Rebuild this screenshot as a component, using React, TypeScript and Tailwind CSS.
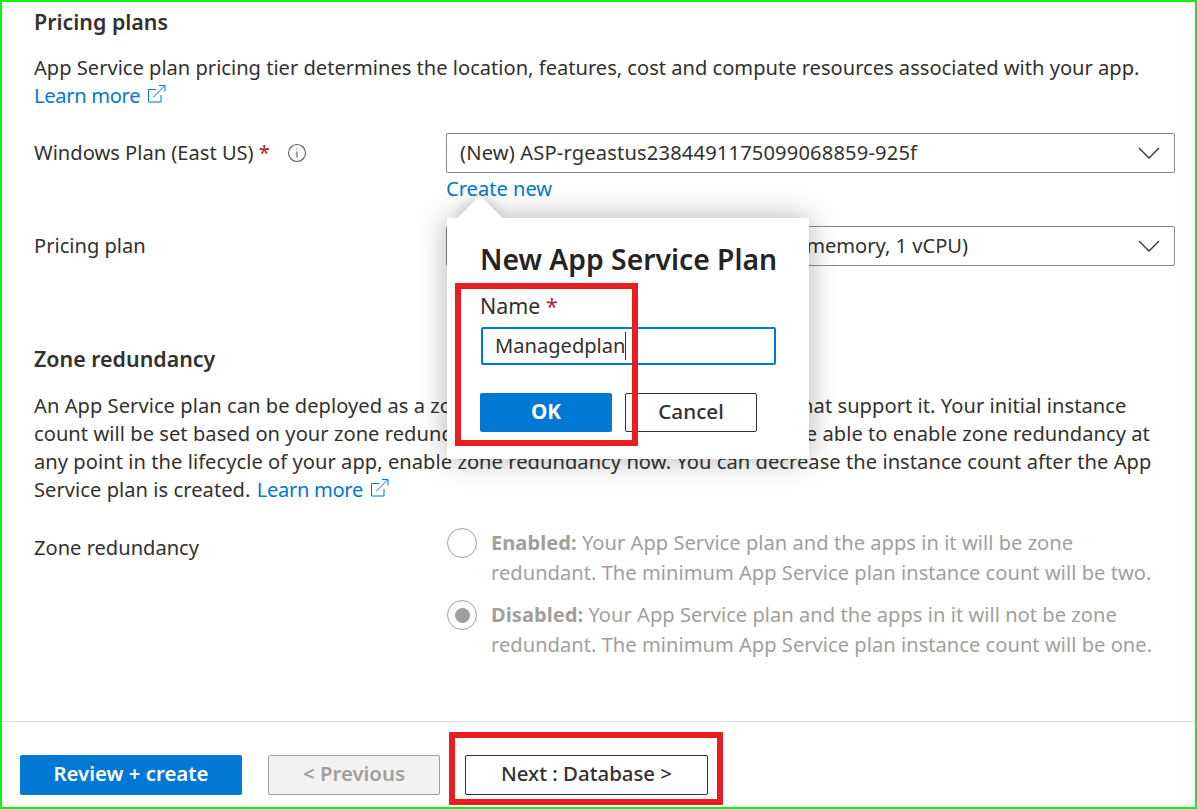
import React from "react";

const font = { fontFamily: '"Noto Sans", "Open Sans", sans-serif' };

function ExternalLink() {
  return (
    <svg width="20" height="20" viewBox="0 0 20 20" fill="none" stroke="#0078d4" strokeWidth="1" className="inline-block ml-[6px] align-[-1px]">
      <path d="M10 5.5H2.5V18H15V11" />
      <path d="M7.5 13L18.5 2M13 1.5H19V7.5" />
    </svg>
  );
}

function Info() {
  return (
    <svg width="20" height="20" viewBox="0 0 20 20" fill="none" stroke="#605e5c" strokeWidth="1.1">
      <circle cx="10" cy="10" r="8.5" />
      <path d="M10 8.5V14.5" />
      <path d="M10 5.4V6.6" />
    </svg>
  );
}

function Chevron() {
  return (
    <svg width="24" height="14" viewBox="0 0 24 14" fill="none" stroke="#323130" strokeWidth="1.3">
      <path d="M2 2L12 12L22 2" />
    </svg>
  );
}

function SelectBox({ text, wide }: { text: string; wide?: boolean }) {
  return (
    <div className="h-[40px] border border-[#8a8886] rounded-[2px] flex items-center justify-between pl-[13px] pr-[13px] bg-white">
      <span className={wide ? "whitespace-nowrap tracking-[0.17px]" : "whitespace-nowrap"}>{text}</span>
      <Chevron />
    </div>
  );
}

function RadioOption({ checked, label, lines }: { checked?: boolean; label: string; lines: string[] }) {
  return (
    <div className="flex items-start gap-[14px] text-[#a19f9d] leading-[30px]">
      <div className="w-[30px] h-[30px] ml-[1px] rounded-full border border-[#a19f9d] flex items-center justify-center shrink-0 bg-white">
        {checked && <div className="w-[15px] h-[15px] rounded-full bg-[#a19f9d]" />}
      </div>
      <div className="whitespace-nowrap tracking-[0.03px]">
        <b className="font-bold">{label}</b> {lines[0]}
        <br />
        {lines[1]}
      </div>
    </div>
  );
}

export default function App() {
  return (
    <div
      style={font}
      className="relative w-[1197px] h-[809px] overflow-hidden bg-white border-2 border-[#0cf512] text-[#323130] text-[20.1px] flex flex-col"
    >
      <main className="flex-1 pl-[32px] pr-[20px] pt-[4px]">
        <h2 className="text-[21.4px] leading-[32px] font-semibold">Pricing plans</h2>
        <p className="mt-[16px] leading-[28px] whitespace-nowrap">
          App Service plan pricing tier determines the location, features, cost and compute resources associated with your app.
          <br />
          <a className="text-[#0078d4] tracking-[-0.3px]">Learn more<ExternalLink /></a>
        </p>

        <div className="mt-[23px] grid grid-cols-[412px_729px]">
          <div className="flex items-center h-[40px] gap-[17px]">
            <span>Windows Plan (East US) <span className="text-[#a4262c]">*</span></span>
            <Info />
          </div>
          <div>
            <SelectBox wide text="(New) ASP-rgeastus2384491175099068859-925f" />
            <a className="block text-[#0078d4] leading-[32px]">Create new</a>
          </div>
        </div>

        <div className="mt-[21px] grid grid-cols-[412px_729px]">
          <div className="flex items-center h-[40px]">Pricing plan</div>
          <SelectBox text="Standard S1 (100 total ACU, 1.75 GiB memory, 1 vCPU)" />
        </div>

        <h2 className="mt-[77px] text-[21.4px] leading-[32px] font-semibold">Zone redundancy</h2>
        <p className="mt-[17px] leading-[28px] whitespace-nowrap tracking-[0.05px]">
          An App Service plan can be deployed as a zone redundant service in the regions that support it. Your initial instance
          <br />
          count will be set based on your zone redundancy selections. If you would like to be able to enable zone redundancy at
          <br />
          any point in the lifecycle of your app, enable zone redundancy now. You can decrease the instance count after the App
          <br />
          Service plan is created. <a className="text-[#0078d4] ml-[1px] tracking-[-0.3px]">Learn more<ExternalLink /></a>
        </p>

        <div className="mt-[24px] grid grid-cols-[412px_729px]">
          <div className="leading-[30px] pt-[5px]">Zone redundancy</div>
          <div className="flex flex-col gap-[12px]">
            <RadioOption
              label="Enabled:"
              lines={[
                "Your App Service plan and the apps in it will be zone",
                "redundant. The minimum App Service plan instance count will be two.",
              ]}
            />
            <RadioOption
              checked
              label="Disabled:"
              lines={[
                "Your App Service plan and the apps in it will not be zone",
                "redundant. The minimum App Service plan instance count will be one.",
              ]}
            />
          </div>
        </div>
      </main>

      <footer className="h-[86px] border-t border-[#e1dfdd] pl-[18px] pt-[33px] flex items-start font-semibold text-[20.4px] leading-[34px]">
        <button className="w-[222px] h-[40px] pb-[5px] rounded-[2px] bg-[#0078d4] text-white">Review + create</button>
        <button className="ml-[26px] w-[172px] h-[40px] pb-[5px] rounded-[2px] bg-[#f3f2f1] border border-[#a19f9d] text-[#a19f9d]">&lt; Previous</button>
        <button className="ml-[25px] w-[243px] h-[40px] pb-[5px] rounded-[2px] bg-white border border-[#323130] font-medium">Next : Database &gt;</button>
      </footer>

      {/* Popover */}
      <div className="absolute left-[445px] top-[216px] w-[362px] h-[241px] bg-white shadow-[0_0_28px_rgba(0,0,0,0.3)] pt-[23px] pl-[33px] pr-[33px]">
        <div className="absolute left-[17px] top-[-16px] w-[32px] h-[32px] rotate-45 bg-white shadow-[-4px_-4px_10px_rgba(0,0,0,0.12)]" />
        <div className="absolute left-0 top-0 w-full h-[20px] bg-white" />
        <div className="relative">
          <h3 className="text-[28.3px] leading-[36px] font-semibold text-[#252423] whitespace-nowrap">New App Service Plan</h3>
          <label className="block mt-[13px] leading-[32px] text-[21.4px]">
            Name <span className="text-[#a4262c]">*</span>
          </label>
          <div className="mt-[5px] h-[38px] ml-px border-2 border-[#0078d4] rounded-[2px] flex items-center pl-[12px]">
            <span className="leading-[28px]">Managedplan</span>
            <span className="w-px h-[28px] bg-[#323130]" />
          </div>
          <div className="mt-[28px] flex gap-[13px] text-[20.7px] leading-[34px]">
            <button className="w-[132px] h-[39px] pb-[3px] rounded-[2px] bg-[#0078d4] text-white font-bold">OK</button>
            <button className="w-[132px] h-[39px] pb-[3px] rounded-[2px] bg-white border border-[#323130] font-medium">Cancel</button>
          </div>
        </div>
      </div>

      {/* Annotations */}
      <div className="absolute left-[453px] top-[281px] w-[183px] h-[163px] border-[6px] border-[#e81e22]" />
      <div className="absolute left-[447px] top-[730px] w-[274px] h-[73px] border-[6px] border-[#e81e22]" />
    </div>
  );
}
